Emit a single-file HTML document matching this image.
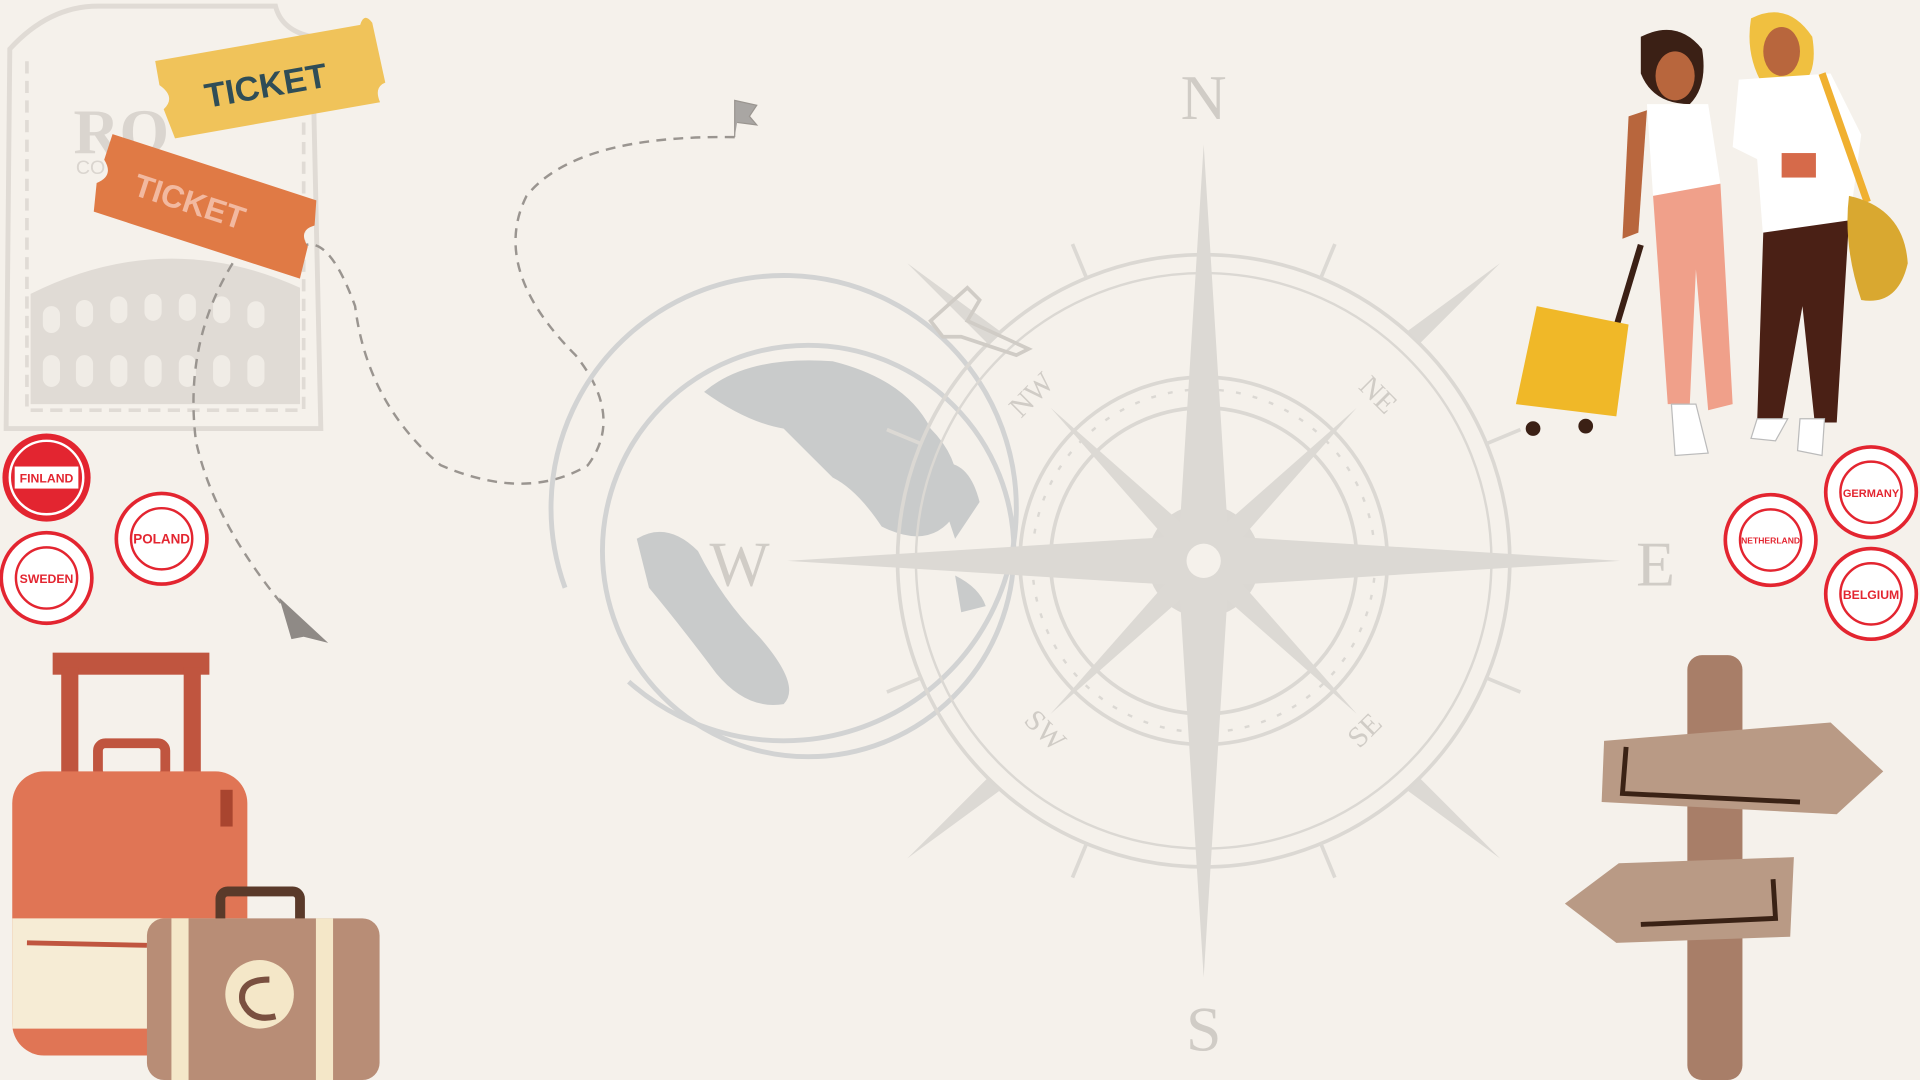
<!DOCTYPE html>
<html><head><meta charset="utf-8"><style>
html,body{margin:0;padding:0;width:1920px;height:1080px;overflow:hidden;background:#f5f1eb}
svg{display:block}
</style></head><body>
<svg width="1920" height="1080" viewBox="0 0 1568 882" xmlns="http://www.w3.org/2000/svg">
<rect width="1568" height="882" fill="#f5f1eb"/>
<g fill="none" stroke="#e0dbd5" stroke-width="4">
<path d="M8 40 Q40 5 80 5 L225 5 Q230 25 255 30 L262 350 L5 350 Z"/>
<path d="M22 50 L22 335 L248 335 L248 45" stroke-dasharray="10 6" stroke-width="3"/>
</g>
<text x="60" y="125" font-family="Liberation Serif,serif" font-size="52" font-weight="bold" fill="#dad5cf">RO</text>
<text x="62" y="142" font-family="Liberation Sans,sans-serif" font-size="16" fill="#dad5cf">CO</text>
<g fill="#e0dbd5"><path d="M25 240 Q135 185 245 235 L245 330 L25 330 Z"/></g>
<g fill="#f0ece6">
<rect x="35" y="250" width="14" height="22" rx="7"/><rect x="62" y="245" width="14" height="22" rx="7"/><rect x="90" y="242" width="14" height="22" rx="7"/><rect x="118" y="240" width="14" height="22" rx="7"/><rect x="146" y="240" width="14" height="22" rx="7"/><rect x="174" y="242" width="14" height="22" rx="7"/><rect x="202" y="246" width="14" height="22" rx="7"/>
<rect x="35" y="290" width="14" height="26" rx="7"/><rect x="62" y="290" width="14" height="26" rx="7"/><rect x="90" y="290" width="14" height="26" rx="7"/><rect x="118" y="290" width="14" height="26" rx="7"/><rect x="146" y="290" width="14" height="26" rx="7"/><rect x="174" y="290" width="14" height="26" rx="7"/><rect x="202" y="290" width="14" height="26" rx="7"/>
</g>
<g fill="none" stroke="#9a9590" stroke-width="2" stroke-dasharray="8 6">
<path d="M600 112 Q470 110 430 160 Q400 220 470 290 Q510 340 480 380 Q430 410 360 380 Q300 330 290 250 Q270 195 250 200"/>
<path d="M190 215 Q150 280 160 360 Q175 430 240 505"/>
</g>
<path d="M228 488 L268 525 L248 520 L238 522 Z" fill="#8f8a86"/>
<path d="M600 112 L600 82 L618 86 L612 95 L618 102 L602 100" fill="#a9a6a3" stroke="#9a9590"/>
<g transform="translate(125 40) rotate(-10)">
<path d="M0 10 L170 10 Q175 0 180 10 L182 60 Q172 62 175 75 L5 75 L0 50 Q12 42 0 30 Z" fill="#f0c35a"/>
<text x="35" y="55" font-family="Liberation Sans,sans-serif" font-size="28" font-weight="bold" fill="#2f4d57">TICKET</text>
</g>
<g transform="translate(95 100) rotate(18)">
<path d="M0 10 L175 10 L180 30 Q168 38 180 48 L182 75 L5 75 L0 52 Q12 42 0 32 Z" fill="#e07a45"/>
<text x="30" y="52" font-family="Liberation Sans,sans-serif" font-size="26" font-weight="bold" fill="#f2b9a0">TICKET</text>
</g>
<g fill="none" stroke="#d2d3d3">
<circle cx="640" cy="415" r="190" stroke-width="4" stroke-dasharray="1100 120" transform="rotate(160 640 415)"/>
<circle cx="660" cy="450" r="168" stroke-width="4"/>
</g>
<g fill="#c9cbcb">
<path d="M575 320 Q610 290 680 295 Q740 310 760 350 Q790 380 780 420 Q760 450 720 430 Q700 400 680 390 Q660 370 640 350 Q610 345 575 320 Z"/>
<path d="M520 440 Q545 425 570 450 Q590 490 620 520 Q655 560 640 575 Q610 580 585 550 Q555 510 530 480 Z"/>
<path d="M760 380 Q790 370 800 410 L780 440 Z"/>
<path d="M780 470 Q800 480 805 495 L785 500 Z"/>
</g>
<g stroke="#dbd8d3" fill="none">
<circle cx="983" cy="458" r="250" stroke-width="3"/>
<circle cx="983" cy="458" r="235" stroke-width="2"/>
<circle cx="983" cy="458" r="150" stroke-width="3"/>
<circle cx="983" cy="458" r="140" stroke-width="2" stroke-dasharray="4 10"/>
<circle cx="983" cy="458" r="125" stroke-width="3"/>
<circle cx="983" cy="458" r="40" stroke-width="12"/>
</g>
<g fill="#dcd9d4">
<path d="M983 118 L1003 438 L983 458 L963 438 Z"/>
<path d="M983 798 L1003 478 L983 458 L963 478 Z"/>
<path d="M643 458 L963 438 L983 458 L963 478 Z"/>
<path d="M1323 458 L1003 438 L983 458 L1003 478 Z"/>
<path d="M858 333 L985 445 L970 460 Z"/><path d="M1108 333 L981 445 L996 460 Z"/>
<path d="M858 583 L985 471 L970 456 Z"/><path d="M1108 583 L981 471 L996 456 Z"/>
<path d="M1225 215 L1160 280 L1150 270 Z"/><path d="M741 215 L806 280 L816 270 Z"/>
<path d="M1225 701 L1160 636 L1150 646 Z"/><path d="M741 701 L806 636 L816 646 Z"/>
</g>
<g stroke="#dcd9d4" stroke-width="3">
<line x1="983" y1="458" x2="983" y2="458"/>
<g transform="translate(983 458)">
<line x1="0" y1="-250" x2="0" y2="-280" transform="rotate(22.5)"/><line x1="0" y1="-250" x2="0" y2="-280" transform="rotate(67.5)"/>
<line x1="0" y1="-250" x2="0" y2="-280" transform="rotate(112.5)"/><line x1="0" y1="-250" x2="0" y2="-280" transform="rotate(157.5)"/>
<line x1="0" y1="-250" x2="0" y2="-280" transform="rotate(202.5)"/><line x1="0" y1="-250" x2="0" y2="-280" transform="rotate(247.5)"/>
<line x1="0" y1="-250" x2="0" y2="-280" transform="rotate(292.5)"/><line x1="0" y1="-250" x2="0" y2="-280" transform="rotate(337.5)"/>
</g></g>
<circle cx="983" cy="458" r="14" fill="#f5f1eb"/>
<g font-family="Liberation Serif,serif" fill="#d0ccc6" text-anchor="middle">
<text x="983" y="97" font-size="52">N</text>
<text x="983" y="858" font-size="52">S</text>
<text x="1352" y="478" font-size="52">E</text>
<text x="604" y="478" font-size="52">W</text>
<text x="848" y="328" font-size="24" transform="rotate(-45 848 328)">NW</text>
<text x="1120" y="328" font-size="24" transform="rotate(45 1120 328)">NE</text>
<text x="848" y="602" font-size="24" transform="rotate(45 848 602)">SW</text>
<text x="1120" y="602" font-size="24" transform="rotate(-45 1120 602)">SE</text>
</g>
<path d="M760 262 L790 235 L800 245 L790 262 L840 285 L830 290 L785 275 L770 275 Z" fill="none" stroke="#d0ccc6" stroke-width="3"/>
<g font-family="Liberation Sans,sans-serif" font-weight="bold" text-anchor="middle" fill="#e32530">
<g transform="translate(38 390)"><circle r="36" fill="#e32530"/><circle r="30" fill="none" stroke="#fff" stroke-width="2"/><rect x="-26" y="-9" width="52" height="18" fill="#fff"/><text y="4" font-size="10">FINLAND</text></g>
<g transform="translate(38 472)"><circle r="37" fill="#fff" stroke="#e32530" stroke-width="3"/><circle r="25" fill="none" stroke="#e32530" stroke-width="2"/><text y="4" font-size="10">SWEDEN</text></g>
<g transform="translate(132 440)"><circle r="37" fill="#fff" stroke="#e32530" stroke-width="3"/><circle r="25" fill="none" stroke="#e32530" stroke-width="2"/><text y="4" font-size="11">POLAND</text></g>
<g transform="translate(1446 441)"><circle r="37" fill="#fff" stroke="#e32530" stroke-width="3"/><circle r="25" fill="none" stroke="#e32530" stroke-width="2"/><text y="3" font-size="7">NETHERLAND</text></g>
<g transform="translate(1528 402)"><circle r="37" fill="#fff" stroke="#e32530" stroke-width="3"/><circle r="25" fill="none" stroke="#e32530" stroke-width="2"/><text y="4" font-size="9">GERMANY</text></g>
<g transform="translate(1528 485)"><circle r="37" fill="#fff" stroke="#e32530" stroke-width="3"/><circle r="25" fill="none" stroke="#e32530" stroke-width="2"/><text y="4" font-size="10">BELGIUM</text></g>
</g>
<path d="M1340 30 Q1370 15 1390 40 Q1395 70 1380 85 Q1350 85 1340 60 Z" fill="#3b2015"/>
<ellipse cx="1368" cy="62" rx="16" ry="20" fill="#b8663d"/>
<path d="M1345 85 L1395 85 L1405 150 L1350 160 Z" fill="#fff"/>
<path d="M1350 160 L1405 150 L1415 330 L1395 335 L1385 220 L1380 330 L1362 330 Z" fill="#f0a08a"/>
<path d="M1330 95 L1345 90 L1338 190 L1325 195 Z" fill="#b8663d"/>
<path d="M1430 15 Q1460 0 1480 30 Q1485 60 1470 70 L1440 70 Q1425 45 1430 15 Z" fill="#f0c040"/>
<ellipse cx="1455" cy="42" rx="15" ry="20" fill="#b8663d"/>
<path d="M1420 65 L1495 60 L1520 110 L1510 185 L1440 195 L1435 130 L1415 120 Z" fill="#fff"/>
<path d="M1440 190 L1510 180 L1500 345 L1482 345 L1472 250 L1455 345 L1435 345 Z" fill="#4a2015"/>
<path d="M1488 60 L1525 165" stroke="#f0b030" stroke-width="6"/>
<path d="M1510 160 Q1555 170 1558 215 Q1550 250 1520 245 Q1505 200 1510 160 Z" fill="#d9a830"/>
<rect x="1455" y="125" width="28" height="20" fill="#d66a4a"/>
<path d="M1340 200 L1310 300" stroke="#3b2015" stroke-width="5"/>
<path d="M1255 250 L1330 265 L1320 340 L1238 330 Z" fill="#f0b828"/>
<circle cx="1252" cy="350" r="6" fill="#3b2015"/><circle cx="1295" cy="348" r="6" fill="#3b2015"/>
<path d="M1365 330 L1385 330 L1395 370 L1368 372 Z M1435 342 L1460 342 L1450 360 L1430 358 Z M1470 342 L1490 342 L1488 372 L1468 368 Z" fill="#fff" stroke="#bbb"/>
<rect x="43" y="533" width="128" height="18" fill="#c0553f"/>
<rect x="50" y="545" width="14" height="95" fill="#c0553f"/><rect x="150" y="545" width="14" height="95" fill="#c0553f"/>
<rect x="80" y="607" width="55" height="28" rx="6" fill="none" stroke="#c0553f" stroke-width="8"/>
<rect x="10" y="630" width="192" height="232" rx="26" fill="#e07555"/>
<path d="M10 750 L202 750 L202 840 L10 840 Z" fill="#f6ecd5"/>
<path d="M22 770 L120 772" stroke="#c0553f" stroke-width="4"/>
<rect x="180" y="645" width="10" height="30" fill="#a9452f"/>
<rect x="180" y="728" width="65" height="30" rx="6" fill="none" stroke="#5a3a2a" stroke-width="8"/>
<rect x="120" y="750" width="190" height="132" rx="14" fill="#b88d76"/>
<rect x="140" y="750" width="14" height="132" fill="#f4e7c8"/>
<rect x="258" y="750" width="14" height="132" fill="#f4e7c8"/>
<circle cx="212" cy="812" r="28" fill="#f4e7c8"/>
<path d="M220 800 Q195 800 198 818 Q205 835 225 830" fill="none" stroke="#7a5040" stroke-width="5"/>
<rect x="1378" y="535" width="45" height="347" rx="12" fill="#a87e68"/>
<path d="M1310 605 L1495 590 L1538 630 L1500 665 L1308 655 Z" fill="#b99a85"/>
<path d="M1328 610 L1325 648 L1470 655" fill="none" stroke="#3a2215" stroke-width="4"/>
<path d="M1322 705 L1465 700 L1462 765 L1320 770 L1278 738 Z" fill="#b99a85"/>
<path d="M1448 718 L1450 750 L1340 755" fill="none" stroke="#3a2215" stroke-width="4"/>
</svg>
</body></html>
